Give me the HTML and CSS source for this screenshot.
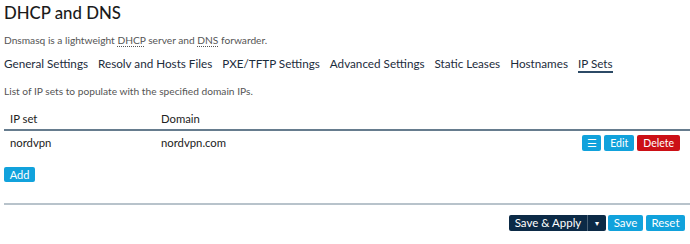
FILE: index.html
```html
<!DOCTYPE html>
<html>
<head>
<meta charset="utf-8">
<link rel="stylesheet" href="styles.css">
</head>
<body>
<div class="page">
  <h2 class="title">DHCP and DNS</h2>
  <div class="desc">Dnsmasq is a lightweight <abbr>DHCP</abbr> server and <abbr>DNS</abbr> forwarder.</div>
  <ul class="tabs">
    <li class="tab">General Settings</li>
    <li class="tab">Resolv and Hosts Files</li>
    <li class="tab">PXE/TFTP Settings</li>
    <li class="tab">Advanced Settings</li>
    <li class="tab">Static Leases</li>
    <li class="tab">Hostnames</li>
    <li class="tab active">IP Sets</li>
  </ul>
  <div class="section-desc">List of IP sets to populate with the specified domain IPs.</div>
  <table class="table">
    <thead>
      <tr><th class="col-set">IP set</th><th>Domain</th><th></th></tr>
    </thead>
    <tbody>
      <tr>
        <td>nordvpn</td>
        <td>nordvpn.com</td>
        <td class="actions">
          <span class="btn blue menu">&#9776;</span><span class="btn blue">Edit</span><span class="btn red">Delete</span>
        </td>
      </tr>
    </tbody>
  </table>
  <div class="add-row"><span class="btn blue add">Add</span></div>
  <div class="rule"></div>
  <div class="footer">
    <span class="btn navy apply">Save &amp; Apply</span><span class="btn navy drop">&#9662;</span><span class="btn blue save">Save</span><span class="btn blue reset">Reset</span>
  </div>
</div>
</body>
</html>
```
FILE: styles.css
```css
* { box-sizing: border-box; }
body {
  margin: 0;
  background: #fff;
  font-family: Lato, "Open Sans", sans-serif;
  color: #222;
}
.page {
  padding-left: 4px;
}
.title {
  margin: 0;
  height: 26px;
  line-height: 26px;
  font-size: 16.8px;
  font-weight: 500;
  color: #1b1b1b;
}
.desc {
  margin-top: 7px;
  line-height: 14px;
  font-size: 10.2px;
  color: #555;
}
.desc abbr {
  text-decoration: underline dotted;
  text-underline-offset: 2px;
}
.tabs {
  list-style: none;
  margin: 9px 0 0;
  padding: 0;
  display: flex;
  gap: 10px;
}
.tab {
  line-height: 14px;
  font-size: 11.7px;
  color: #1c2c3c;
  padding-bottom: 1px;
  border-bottom: 2px solid transparent;
}
.tab.active {
  border-bottom-color: #2c4a66;
}
.section-desc {
  margin-top: 11px;
  line-height: 14px;
  font-size: 10.2px;
  color: #555;
}
.table {
  margin-top: 10px;
  width: 100%;
  border-collapse: collapse;
  font-size: 11.3px;
  color: #222;
}
.table th {
  text-align: left;
  font-weight: 400;
  padding: 4px 6px 3px;
  line-height: 14px;
  border-bottom: 2px solid #667c8e;
}
.table th.col-set { width: 151px; }
.table td {
  padding: 4px 6px 4px;
  line-height: 16px;
}
.table td.actions {
  text-align: right;
  padding-right: 10px;
  white-space: nowrap;
}
.btn {
  display: inline-block;
  height: 16px;
  line-height: 16px;
  font-size: 10.5px;
  color: #fff;
  border-radius: 2px;
  padding: 0 6px;
  vertical-align: top;
}
.btn.blue { background: #11a2dc; }
.btn.red { background: #cc1016; }
.btn.navy { background: #0c2a46; }
.actions .btn + .btn { margin-left: 3px; }
.btn.menu { width: 19px; padding: 0; text-align: center; }
.add-row {
  margin-top: 12px;
  height: 15px;
}
.btn.add { height: 15px; line-height: 15px; width: 31px; text-align: center; padding: 0; font-size: 11px; }
.rule {
  margin-top: 21px;
  height: 2px;
  background: #b8c3cb;
}
.footer {
  margin-top: 10px;
  display: flex;
  justify-content: flex-end;
  padding-right: 5px;
}
.btn.apply { width: 78px; text-align: center; padding: 0; border-radius: 2px 0 0 2px; font-size: 11.5px; }
.btn.drop { width: 19px; padding: 0; text-align: center; font-size: 8px; border-left: 1px solid #4a6277; border-radius: 0 2px 2px 0; }
.btn.save { margin-left: 2px; width: 35px; text-align: center; padding: 0; font-size: 11.5px; }
.btn.reset { margin-left: 3px; width: 39px; text-align: center; padding: 0; font-size: 11.5px; }
```
